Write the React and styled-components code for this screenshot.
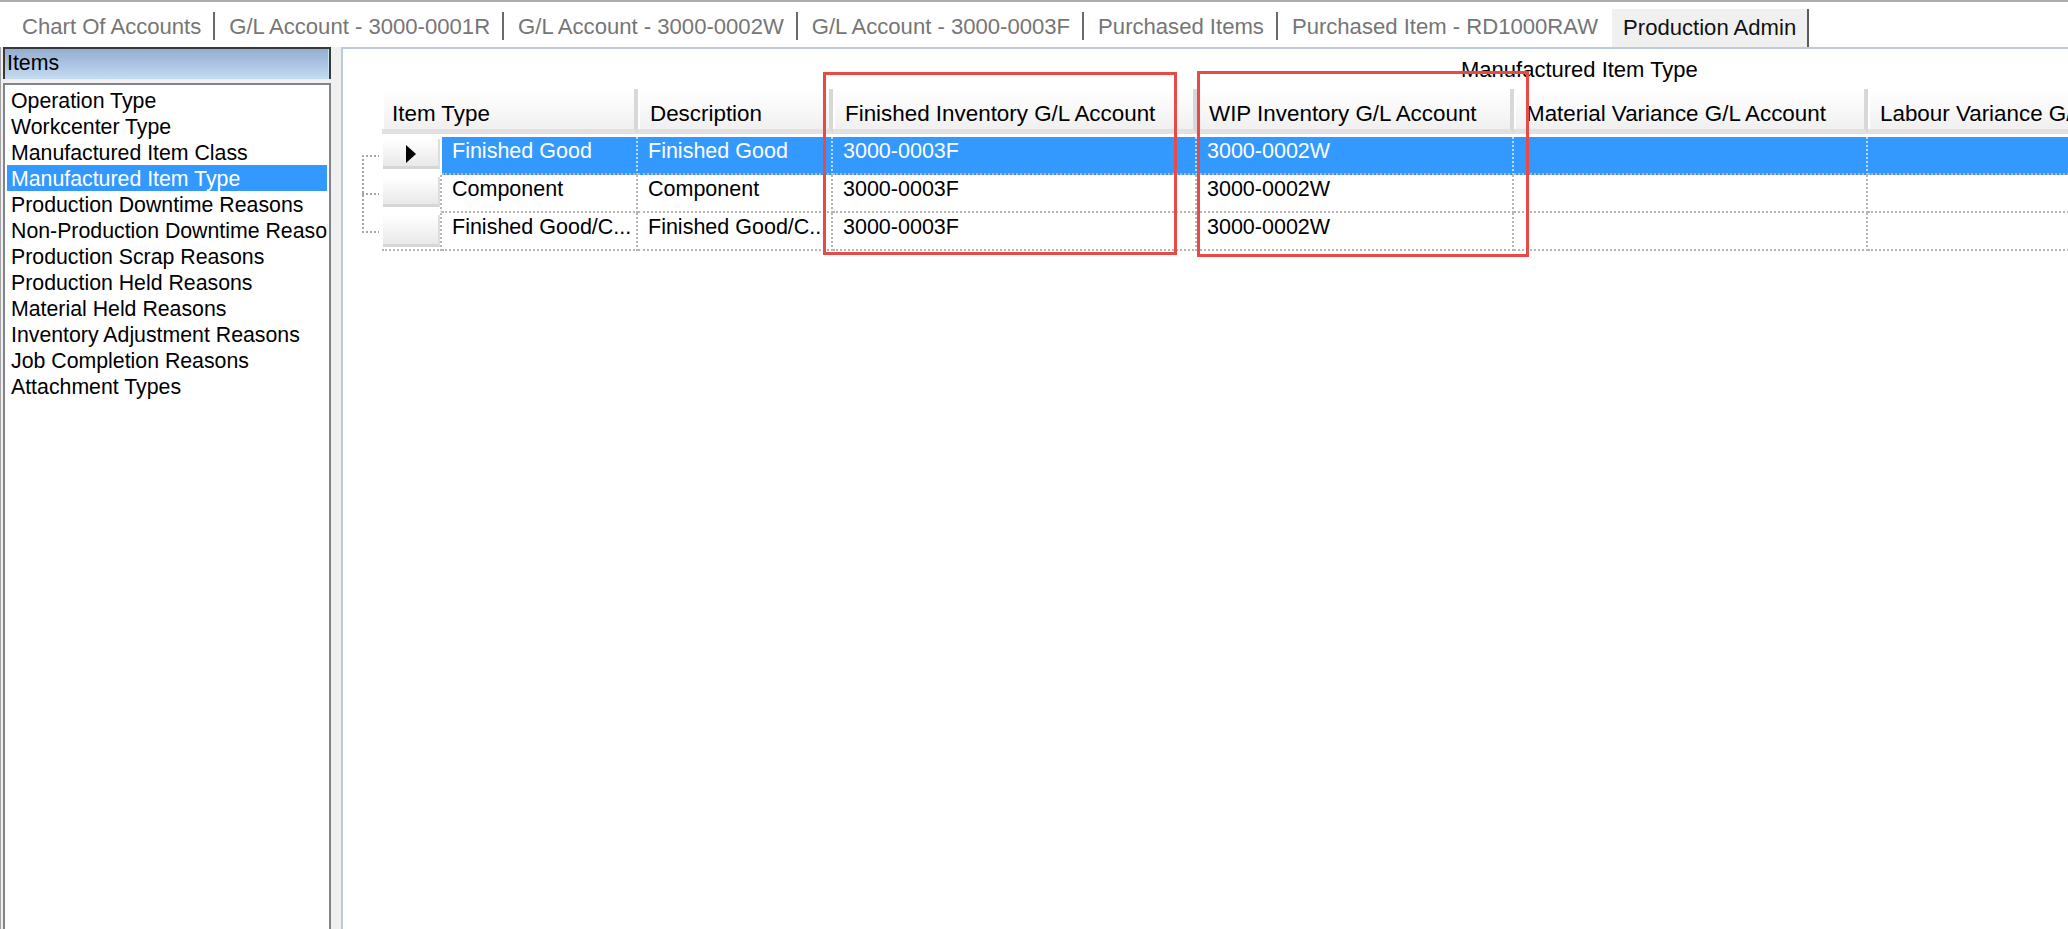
import React from 'react';
import styled, { createGlobalStyle } from 'styled-components';

const GlobalStyle = createGlobalStyle`
  html, body {
    margin: 0;
    padding: 0;
    background: #fff;
  }
  body {
    font-family: 'Liberation Sans', Arial, sans-serif;
    color: #000;
  }
`;

const COLS = '60px 196px 195px 364px 317px 354px 400px';

const Window = styled.div`
  width: 2068px;
  height: 929px;
  overflow: hidden;
  display: flex;
  flex-direction: column;
  background: #fff;
`;

const TabStrip = styled.div`
  height: 47px;
  flex-shrink: 0;
  box-sizing: border-box;
  border-top: 2px solid #adadad;
  padding: 10px 0 0 8px;
  display: flex;
  align-items: flex-start;
  font-size: 22.1px;
  line-height: 25px;
`;

const Tab = styled.div`
  height: 28px;
  box-sizing: border-box;
  padding: 2px 12px 0 14px;
  border-right: 2px solid ${p => (p.$last ? 'transparent' : '#6a6a6a')};
  color: #767676;
  white-space: nowrap;
`;

const ActiveTab = styled.div`
  margin-top: -3px;
  height: 38px;
  box-sizing: border-box;
  padding: 6px 11px 0 11px;
  background: #f0f0f0;
  border-right: 2px solid #5c5c5c;
  color: #111;
  white-space: nowrap;
`;

const Body = styled.div`
  flex: 1;
  min-height: 0;
  display: flex;
  background: #f0f0f0;
`;

const LeftPane = styled.div`
  width: 331px;
  flex-shrink: 0;
  box-sizing: border-box;
  border-left: 1px solid #a3a3a3;
  padding-left: 2px;
  display: flex;
  flex-direction: column;
`;

const ListHeader = styled.div`
  height: 32px;
  flex-shrink: 0;
  box-sizing: border-box;
  border: 2px solid #383838;
  border-bottom: none;
  padding: 2px 0 0 2px;
  background: linear-gradient(180deg, #94adcf 0%, #aec6e3 55%, #c6dcf2 100%);
  box-shadow: inset -1px 0 0 #bfe6f5;
  font-size: 21.3px;
  line-height: 25px;
  color: #000;
`;

const ListBox = styled.div`
  margin-top: 4px;
  flex: 1;
  box-sizing: border-box;
  border: 2px solid #80858d;
  border-bottom: none;
  padding: 2px;
  background: #fff;
  overflow: hidden;
`;

const ListItem = styled.div`
  height: 26px;
  box-sizing: border-box;
  padding: 1px 0 0 4px;
  font-size: 21.3px;
  line-height: 26px;
  white-space: nowrap;
  overflow: hidden;
  background: ${p => (p.$selected ? '#3399ff' : 'transparent')};
  color: ${p => (p.$selected ? '#fff' : '#000')};
`;

const RightPane = styled.div`
  flex: 1;
  min-width: 0;
  margin-left: 10px;
  position: relative;
  background: #fff;
  border-top: 2px solid #bccbdc;
  border-left: 2px solid #bccbdc;
  overflow: hidden;
`;

const Caption = styled.div`
  padding: 8px 0 0 1118px;
  font-size: 22px;
  line-height: 25px;
  white-space: nowrap;
`;

const GridArea = styled.div`
  margin-top: 7px;
  padding-left: 19px;
  display: flex;
  align-items: flex-start;
`;

const TreeGutter = styled.div`
  width: 20px;
  flex-shrink: 0;
  padding-top: 48px;
`;

const Table = styled.div`
  flex-shrink: 0;
  display: flex;
  flex-direction: column;
`;

const HeaderRow = styled.div`
  display: grid;
  grid-template-columns: ${COLS};
  height: 45px;
  margin-bottom: 3px;
`;

const HeaderCell = styled.div`
  grid-column: span ${p => p.$span || 1};
  box-sizing: border-box;
  height: 45px;
  padding: 12px 0 0 ${p => (p.$first ? 10 : 12)}px;
  background: linear-gradient(180deg, #ffffff 0%, #f9f9f9 45%, #f0f0f0 100%);
  border-bottom: 5px solid #e1e1e1;
  border-right: 4px solid #d8d8d8;
  box-shadow: inset 2px 0 0 #ffffff;
  font-size: 22.4px;
  line-height: 25px;
  white-space: nowrap;
  overflow: hidden;
`;

const DataRow = styled.div`
  display: grid;
  grid-template-columns: ${COLS};
  height: 38px;
`;

const RowHeader = styled.div`
  box-sizing: border-box;
  height: 38px;
  padding: 2px 0 ${p => (p.$last ? 2 : 4)}px 1px;
  border-right: 2px dotted ${p => (p.$selected ? 'transparent' : '#b5b5b5')};
  border-bottom: 2px dotted ${p => (p.$last ? '#b5b5b5' : 'transparent')};
`;

const RowButton = styled.div`
  height: 100%;
  box-sizing: border-box;
  background: linear-gradient(180deg, #ffffff 0%, #f4f4f4 50%, #e9e9e9 100%);
  border-bottom: 3px solid #d6d6d6;
  border-right: 2px solid #dedede;
  display: flex;
  align-items: center;
  justify-content: center;
`;

const Arrow = styled.div`
  width: 0;
  height: 0;
  margin-top: 2px;
  border-left: 10px solid #000;
  border-top: 9px solid transparent;
  border-bottom: 9px solid transparent;
`;

const Cell = styled.div`
  box-sizing: border-box;
  height: 38px;
  padding: 2px 0 0 10px;
  border-bottom: 2px dotted #b5b5b5;
  border-right: 2px dotted ${p => (p.$selected ? '#bcdcff' : '#b5b5b5')};
  background: ${p => (p.$selected ? '#3399ff' : '#fff')};
  color: ${p => (p.$selected ? '#fff' : '#000')};
  font-size: 21.5px;
  line-height: 25px;
  white-space: nowrap;
  overflow: hidden;
`;

const Highlight = styled.div`
  position: absolute;
  box-sizing: border-box;
  border: 3px solid #e84b46;
  z-index: 2;
  pointer-events: none;
`;

const tabs = [
  'Chart Of Accounts',
  'G/L Account - 3000-0001R',
  'G/L Account - 3000-0002W',
  'G/L Account - 3000-0003F',
  'Purchased Items',
  'Purchased Item - RD1000RAW',
];

const listItems = [
  'Operation Type',
  'Workcenter Type',
  'Manufactured Item Class',
  'Manufactured Item Type',
  'Production Downtime Reasons',
  'Non-Production Downtime Reasons',
  'Production Scrap Reasons',
  'Production Held Reasons',
  'Material Held Reasons',
  'Inventory Adjustment Reasons',
  'Job Completion Reasons',
  'Attachment Types',
];

const columns = [
  'Item Type',
  'Description',
  'Finished Inventory G/L Account',
  'WIP Inventory G/L Account',
  'Material Variance G/L Account',
  'Labour Variance G/L Account',
];

const rows = [
  ['Finished Good', 'Finished Good', '3000-0003F', '3000-0002W', '', ''],
  ['Component', 'Component', '3000-0003F', '3000-0002W', '', ''],
  ['Finished Good/C...', 'Finished Good/C...', '3000-0003F', '3000-0002W', '', ''],
];

function TreeLines() {
  return (
    <svg width="20" height="114" viewBox="0 0 20 114">
      <g stroke="#a6a6a6" strokeWidth="2" strokeDasharray="2 2" fill="none">
        <line x1="1" y1="18" x2="1" y2="96" />
        <line x1="0" y1="19" x2="17" y2="19" />
        <line x1="0" y1="57" x2="17" y2="57" />
        <line x1="0" y1="95" x2="17" y2="95" />
      </g>
    </svg>
  );
}

export default function App() {
  const selectedRow = 0;

  return (
    <Window>
      <GlobalStyle />
      <TabStrip>
        {tabs.map((t, i) => (
          <Tab key={t} $last={i === tabs.length - 1}>
            {t}
          </Tab>
        ))}
        <ActiveTab>Production Admin</ActiveTab>
      </TabStrip>

      <Body>
        <LeftPane>
          <ListHeader>Items</ListHeader>
          <ListBox>
            {listItems.map(item => (
              <ListItem key={item} $selected={item === 'Manufactured Item Type'}>
                {item}
              </ListItem>
            ))}
          </ListBox>
        </LeftPane>

        <RightPane>
          <Caption>Manufactured Item Type</Caption>
          <GridArea>
            <TreeGutter>
              <TreeLines />
            </TreeGutter>
            <Table>
              <HeaderRow>
                {columns.map((c, i) => (
                  <HeaderCell key={c} $first={i === 0} $span={i === 0 ? 2 : 1}>
                    {c}
                  </HeaderCell>
                ))}
              </HeaderRow>
              {rows.map((r, ri) => {
                const sel = ri === selectedRow;
                return (
                  <DataRow key={ri}>
                    <RowHeader $selected={sel} $last={ri === rows.length - 1}>
                      <RowButton>{sel && <Arrow />}</RowButton>
                    </RowHeader>
                    {r.map((v, ci) => (
                      <Cell key={ci} $selected={sel}>
                        {v}
                      </Cell>
                    ))}
                  </DataRow>
                );
              })}
            </Table>
          </GridArea>

          <Highlight style={{ left: 480, top: 23, width: 354, height: 183 }} />
          <Highlight style={{ left: 854, top: 22, width: 332, height: 186 }} />
        </RightPane>
      </Body>
    </Window>
  );
}
